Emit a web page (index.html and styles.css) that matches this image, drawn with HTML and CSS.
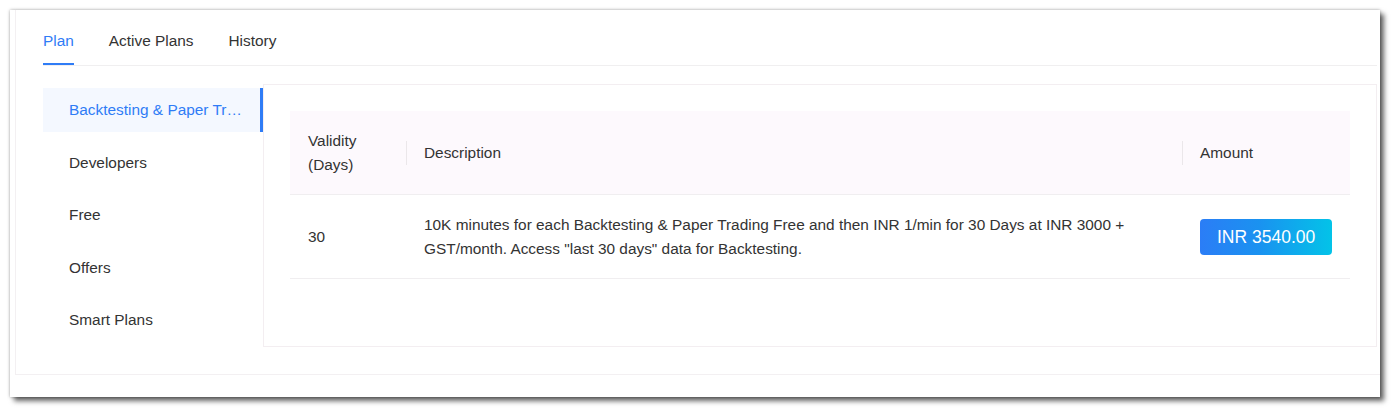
FILE: index.html
```html
<!DOCTYPE html>
<html lang="en">
<head>
<meta charset="utf-8">
<title>Plans</title>
<link rel="stylesheet" href="styles.css">
</head>
<body>
<div class="card">
  <div class="inner">
    <nav class="tabs">
      <div class="tab active">Plan</div>
      <div class="tab">Active Plans</div>
      <div class="tab">History</div>
    </nav>
    <div class="body">
      <ul class="side">
        <li class="side-item active"><span class="side-text">Backtesting &amp; Paper Trading</span></li>
        <li class="side-item"><span class="side-text">Developers</span></li>
        <li class="side-item"><span class="side-text">Free</span></li>
        <li class="side-item"><span class="side-text">Offers</span></li>
        <li class="side-item"><span class="side-text">Smart Plans</span></li>
      </ul>
      <section class="panel">
        <table class="plans">
          <colgroup>
            <col class="c1"><col class="c2"><col class="c3">
          </colgroup>
          <thead>
            <tr>
              <th>Validity<br>(Days)</th>
              <th class="sep">Description</th>
              <th class="sep">Amount</th>
            </tr>
          </thead>
          <tbody>
            <tr>
              <td>30</td>
              <td>10K minutes for each Backtesting &amp; Paper Trading Free and then INR 1/min for 30 Days at INR 3000 + GST/month. Access "last 30 days" data for Backtesting.</td>
              <td class="amount"><span class="price">INR 3540.00</span></td>
            </tr>
          </tbody>
        </table>
      </section>
    </div>
  </div>
</div>
</body>
</html>
```
FILE: styles.css
```css
* { box-sizing: border-box; }
html, body { margin: 0; background: #ffffff; }
body {
  padding: 10px 16px 16px 10px;
  font-family: "Liberation Sans", Arial, sans-serif;
  font-size: 15.4px;
  color: #333333;
}
.card {
  width: 1370px;
  height: 387px;
  background: #ffffff;
  padding: 0 0 22px 5px;
  box-shadow: 0 0 3px rgba(0,0,0,0.35), 4px 4px 5px rgba(0,0,0,0.6);
}
.inner {
  height: 100%;
  border-left: 1px solid #f3f0f2;
  border-bottom: 1px solid #f3f0f2;
  padding: 0 3px 27px 27px;
  display: flex;
  flex-direction: column;
}
.tabs {
  display: flex;
  gap: 35px;
  border-bottom: 1px solid #f0eff0;
}
.tab {
  padding: 20px 0 11px;
  line-height: 22px;
  border-bottom: 2px solid transparent;
  color: #333333;
}
.tab.active {
  color: #2f7cf6;
  border-bottom-color: #2f7cf6;
}
.body {
  display: flex;
  margin-top: 18px;
}
.side {
  list-style: none;
  margin: 0;
  padding: 4px 0 0;
  width: 220px;
  display: flex;
  flex-direction: column;
  gap: 8.6px;
}
.side-item {
  height: 44px;
  display: flex;
  align-items: center;
  padding: 0 18px 0 26px;
  border-right: 3px solid transparent;
  line-height: 22px;
}
.side-text {
  white-space: nowrap;
  overflow: hidden;
  text-overflow: ellipsis;
}
.side-item.active {
  background: #f4f8ff;
  border-right-color: #2f7cf6;
  color: #2f7cf6;
}
.panel {
  flex: 1;
  height: 263px;
  border: 1px solid #f3eef1;
  padding: 26px 26px 0;
}
.plans {
  width: 100%;
  table-layout: fixed;
  border-collapse: collapse;
}
.c1 { width: 116px; }
.c2 { width: 776px; }
.c3 { width: 168px; }
.plans th, .plans td {
  text-align: left;
  font-weight: normal;
  line-height: 24px;
  padding: 18px 18px 17px;
  border-bottom: 1px solid #f0eef0;
  vertical-align: middle;
}
.plans td.amount {
  padding-right: 0;
  white-space: nowrap;
}
.plans th {
  background: #fdf9fd;
  position: relative;
}
.plans th.sep::before {
  content: "";
  position: absolute;
  left: 0;
  top: 30px;
  width: 1px;
  height: 24px;
  background: #ebe7ea;
}
.price {
  display: inline-block;
  font-size: 17.5px;
  line-height: 36px;
  padding: 0 17px;
  border-radius: 4px;
  color: #ffffff;
  white-space: nowrap;
  background: linear-gradient(90deg, #2b7df6 0%, #1a92f0 45%, #03c3e8 100%);
}
```
